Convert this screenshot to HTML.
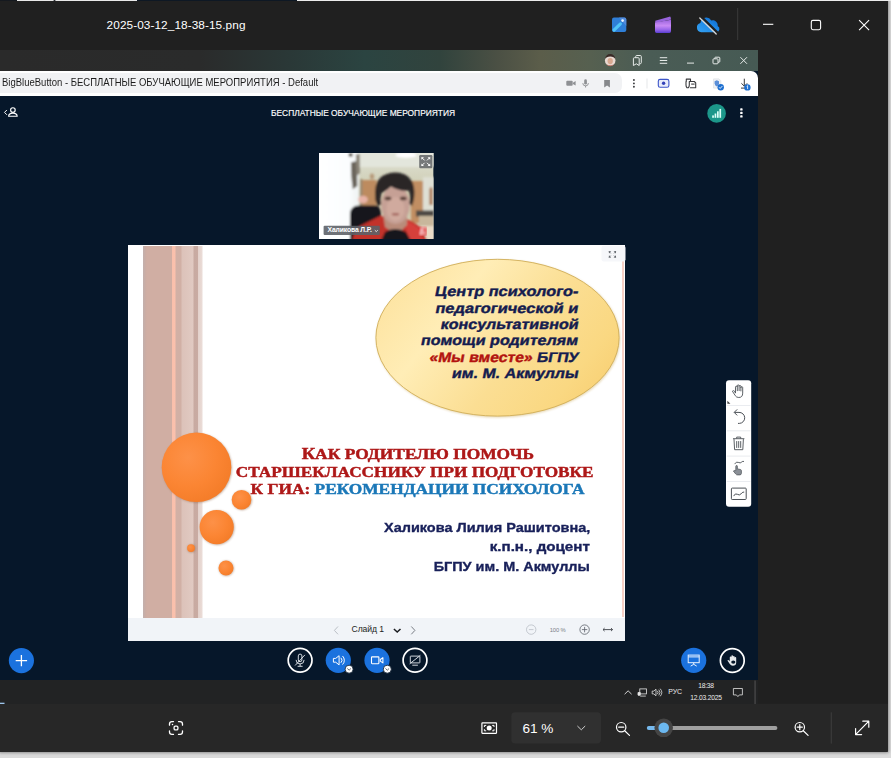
<!DOCTYPE html>
<html lang="ru">
<head>
<meta charset="utf-8">
<title>Photos</title>
<style>
*{margin:0;padding:0;box-sizing:border-box}
html,body{width:891px;height:758px;overflow:hidden;background:#dadada;font-family:"Liberation Sans",sans-serif}
.abs{position:absolute}
#win{position:absolute;left:0;top:0;width:888.2px;height:751.6px;background:#202020;overflow:hidden;border-bottom-right-radius:1.5px;box-shadow:0 0 3px 1px rgba(0,0,0,0.35)}
#toprow{position:absolute;left:0;top:0;width:891px;height:1px;background:linear-gradient(90deg,#15191f 0,#15191f 16.8px,#e9e9e9 17.2px,#e9e9e9 53.3px,#2a2d33 53.8px,#2a2d33 55.2px,#e9e9e9 55.7px,#e9e9e9 137px,#0e1824 137.5px,#0e1824 296.5px,#ececec 297.5px,#ececec 891px)}
/* photos title */
#fname{position:absolute;left:106.6px;top:16.1px;color:#fff;font-size:11.8px;line-height:18px;white-space:nowrap;letter-spacing:0.08px}
/* screenshot area */
#shot{position:absolute;left:0;top:49.5px;width:758px;height:654.3px;background:#06172a;overflow:hidden}
#brtitle{position:absolute;left:0;top:0;width:758px;height:21.5px;background:linear-gradient(90deg,#2a2a2a 0,#2a2b2b 200px,#2a3837 290px,#2b4441 365px,#31433d 440px,#4b5044 498px,#5b5d4a 540px,#566050 590px,#4a5c55 650px,#465a54 758px)}
#brbar{position:absolute;left:0;top:21.5px;width:758px;height:25px;background:#fff;border-top-right-radius:7px}
#brurl{position:absolute;left:0;top:2.2px;width:621.5px;height:20.2px;background:#f1f2f4;border-radius:0 7px 7px 0}
#brtext{position:absolute;left:1.8px;top:5.1px;font-size:10.2px;line-height:14px;color:#1c1c1c;white-space:nowrap;transform:scaleX(0.9335);transform-origin:0 50%}
#bbbtitle{position:absolute;left:0;width:726px;top:57.1px;-webkit-text-stroke:0.15px;text-align:center;color:#fff;font-size:8.4px;line-height:12px;white-space:nowrap}
#slide{position:absolute;left:128px;top:195.8px;width:497.4px;height:395.7px;background:#fff;overflow:hidden}
#sbar{position:absolute;left:0;top:372.5px;width:100%;height:24px;background:#f1f4f8}
#taskbar{position:absolute;left:0;top:630.3px;width:758px;height:24px;background:#222324}
#etext{position:absolute;left:200.7px;top:37.9px;width:250px;text-align:right;font:bold 14px/16.34px "Liberation Sans",sans-serif;color:#151c4f;white-space:nowrap;-webkit-text-stroke:0.4px}
#etext span,#auth span{display:inline-block;transform-origin:100% 50%}
#ttl{position:absolute;left:64.5px;top:200.35px;width:450px;text-align:center;font:bold 15.1px/17.3px "Liberation Serif",serif;color:#ae1818;white-space:nowrap;-webkit-text-stroke:0.45px}
#ttl span{display:inline-block;transform-origin:50% 50%}
#ttl i{font-style:normal;font-size:16.1px;line-height:1px}
#ttl b{color:#1b78b8}
#ttl div:nth-child(2){margin-top:0.9px}
#ttl div:nth-child(3){margin-top:-0.4px}
#auth{position:absolute;left:200px;top:272.6px;width:261.8px;text-align:right;font:bold 13.3px/19.35px "Liberation Sans",sans-serif;color:#18205a;white-space:nowrap;-webkit-text-stroke:0.35px}
.t{white-space:nowrap;line-height:10px}
</style>
</head>
<body>
<div id="win">
  <!-- photos title icons -->
  <svg class="abs" style="left:600px;top:8px" width="290" height="36" viewBox="600 8 290 36">
    <defs>
      <linearGradient id="cg" x1="0" y1="0" x2="0" y2="1"><stop offset="0" stop-color="#9a63dd"/><stop offset="0.45" stop-color="#c98af5"/><stop offset="0.75" stop-color="#9a66ea"/><stop offset="1" stop-color="#5a3fd0"/></linearGradient>
      <linearGradient id="og" x1="0" y1="1" x2="1" y2="0"><stop offset="0" stop-color="#36a3f3"/><stop offset="0.6" stop-color="#1a84e4"/><stop offset="1" stop-color="#0d5fc0"/></linearGradient>
    </defs>
    <!-- edit -->
    <rect x="612" y="17.6" width="14.3" height="14.4" rx="2" fill="#2f7fd8"/>
    <path d="M619 17.6h5.3a2 2 0 0 1 2 2V26z" fill="#5b8fdc" opacity="0.8"/>
    <path d="M614 30.200L620.400 23.800" stroke="#4fc4f8" stroke-width="3.100" stroke-linecap="round"/>
    <circle cx="622.6" cy="20.6" r="1.3" fill="#eef6ff"/>
    <!-- clipchamp -->
    <path d="M655.200 20.800L669.400 16.700a1 1 0 0 1 1.300 0.700L671 19.600L655.400 23z" fill="#9863dc"/>
    <path d="M655 22.600L671 19.800V31.300a1.600 1.600 0 0 1-1.600 1.600H656.600a1.600 1.600 0 0 1-1.600-1.600z" fill="url(#cg)"/>
    <!-- onedrive -->
    <path transform="translate(696.900 0) scale(0.940 1) translate(-696.900 0)" d="M701.5 32.2a4.6 4.6 0 0 1-0.9-9.1a6.3 6.3 0 0 1 11.6-2.6a5.2 5.2 0 0 1 6.8 5.6a3.2 3.2 0 0 1-1.6 6.1z" fill="url(#og)"/>
    <path d="M701.6 17.2L718.2 33.4" stroke="#202020" stroke-width="2.4"/>
    <path d="M699.8 18L716.2 34" stroke="#d9d9d9" stroke-width="1.3" stroke-linecap="round"/>
    <!-- separator -->
    <rect x="737.2" y="8" width="1" height="32" fill="#3b3b3b"/>
    <!-- window controls -->
    <path d="M763 24.3h10.3" stroke="#fff" stroke-width="1.1"/>
    <rect x="811.3" y="20.4" width="9.3" height="9.3" rx="1.6" fill="none" stroke="#fff" stroke-width="1.1"/>
    <path d="M859.1 20.1l10 10M869.1 20.1l-10 10" stroke="#fff" stroke-width="1.1"/>
  </svg>
  <!-- photos bottom bar -->
  <svg class="abs" style="left:0;top:703px" width="888.5" height="49" viewBox="0 703 888.500 49">
    <rect x="0" y="703.7" width="888.5" height="48.3" fill="#272727"/>
    <!-- left icon -->
    <g fill="none" stroke="#fff" stroke-width="1.300" stroke-linecap="round">
      <path d="M169.500 725.200v-1.200a2.400 2.400 0 0 1 2.400-2.400h1.600M178.500 721.600h1.600a2.400 2.400 0 0 1 2.400 2.400v1.200M182.500 730.800v1.200a2.400 2.400 0 0 1-2.400 2.400h-1.600M173.500 734.400h-1.600a2.400 2.400 0 0 1-2.400-2.400v-1.200"/>
      <rect x="174.100" y="726.100" width="3.800" height="3.800" rx="1.200"/>
    </g>
    <circle cx="172.500" cy="724.500" r="0.750" fill="#fff"/>
    <!-- fit icon -->
    <rect x="481.900" y="722.900" width="14.600" height="10.400" rx="0.500" fill="none" stroke="#fff" stroke-width="1.200"/>
    <path d="M484.400 727v-1.600h1.800M492.200 725.400h1.800v1.600M494 729.200v1.600h-1.800M486.200 730.800h-1.800v-1.600" fill="none" stroke="#fff" stroke-width="1"/>
    <circle cx="489.200" cy="728.100" r="2.500" fill="#fff"/>
    <!-- zoom dropdown -->
    <rect x="511.300" y="712.300" width="89.700" height="31.300" rx="4" fill="#303030"/>
    <path d="M577.400 726l3.900 3.800l3.900-3.800" fill="none" stroke="#cfcfcf" stroke-width="1"/>
    <!-- zoom out -->
    <circle cx="621.200" cy="727.200" r="4.700" fill="none" stroke="#fff" stroke-width="1.200"/><path d="M618.700 727.200h5M624.700 730.700l4.800 4.700" stroke="#fff" stroke-width="1.200" stroke-linecap="round"/>
    <!-- slider -->
    <rect x="646.800" y="726" width="20" height="3.900" rx="1.950" fill="#76b9ed"/>
    <rect x="664" y="726" width="113.400" height="3.900" rx="1.950" fill="#9f9f9f"/>
    <circle cx="663.700" cy="727.800" r="9.300" fill="#454545"/>
    <circle cx="663.700" cy="727.800" r="5.300" fill="#6cb8f0"/>
    <!-- zoom in -->
    <circle cx="799.800" cy="727.200" r="4.700" fill="none" stroke="#fff" stroke-width="1.200"/><path d="M797.300 727.200h5M799.800 724.700v5M803.300 730.700l4.800 4.700" stroke="#fff" stroke-width="1.200" stroke-linecap="round"/>
    <rect x="830.800" y="712.300" width="0.900" height="31.300" fill="#404040"/>
    <!-- expand -->
    <path d="M855.600 734.600l13.200-13.400M862.800 721.200h6v6M855.600 728.600v6h6" fill="none" stroke="#fff" stroke-width="1.200" stroke-linecap="round" stroke-linejoin="round"/>
  </svg>
  <div class="abs t" style="left:522.400px;top:720.600px;font-size:13.600px;line-height:16px;color:#fff">61 %</div>
  <div id="fname">2025-03-12_18-38-15.png</div>
  <div id="shot">
    <div id="brtitle"></div>
    <div id="brbar"><div id="brurl"></div><div id="brtext">BigBlueButton - БЕСПЛАТНЫЕ ОБУЧАЮЩИЕ МЕРОПРИЯТИЯ - Default</div></div>
    <svg class="abs" style="left:540px;top:0" width="218" height="46" viewBox="540 49.5 218 46">
      <!-- avatar -->
      <circle cx="610.2" cy="60" r="5.3" fill="#e8d9d2"/>
      <path d="M605.2 58.5a5 5 0 0 1 10 0q-1-2.6-5-2.6t-5 2.600z" fill="#3a2a26"/>
      <ellipse cx="610.2" cy="60.6" rx="2.7" ry="3.1" fill="#d8a890"/>
      <path d="M606 63.6q4.200 2.600 8.400 0a5.300 5.300 0 0 1-8.400 0z" fill="#c96a5a"/>
      <!-- tabs icon -->
      <g fill="none" stroke="#e6eae8" stroke-width="1">
        <path d="M635.700 57.2v-1.200a1 1 0 0 1 1-1h3.600a1 1 0 0 1 1 1v6.200a1 1 0 0 1-1 1h-0.600"/>
        <path d="M633.400 58.200a1 1 0 0 1 1-1h3.800a1 1 0 0 1 1 1v6.800l-2.900-1.700l-2.900 1.700z"/>
      </g>
      <!-- hamburger -->
      <path d="M659.800 57.200h7.400M659.800 60h7.400M659.800 62.800h7.400" stroke="#e6eae8" stroke-width="1"/>
      <!-- min / restore / close -->
      <path d="M687 62.600h7" stroke="#e6eae8" stroke-width="1"/>
      <g fill="none" stroke="#e6eae8" stroke-width="1"><rect x="713" y="58.300" width="5" height="5" rx="0.800"/><path d="M714.800 58.300v-0.800a0.800 0.800 0 0 1 0.800-0.800h3.400a0.800 0.800 0 0 1 0.800 0.800v3.400a0.800 0.800 0 0 1-0.800 0.800h-1"/></g>
      <path d="M740.400 56.700l6.600 6.600M747 56.700l-6.600 6.600" stroke="#e6eae8" stroke-width="1"/>
      <!-- address bar icons -->
      <g fill="#8e9093">
        <rect x="566.300" y="80.300" width="6.400" height="5" rx="1"/><path d="M572.900 82.200l2.700-1.700v4.600l-2.700-1.700z"/>
        <rect x="584.200" y="78.800" width="2.700" height="5.200" rx="1.350"/>
        <path d="M582.800 82.600a2.800 2.800 0 0 0 5.600 0" fill="none" stroke="#8e9093" stroke-width="0.900"/><rect x="585.150" y="85.200" width="0.900" height="1.800"/>
        <path d="M604.200 79.400h5.700v7.600l-2.850-2.100l-2.850 2.100z" fill="#86888b"/>
      </g>
      <g fill="#3c3d40"><circle cx="633.900" cy="79.500" r="0.950"/><circle cx="633.900" cy="82.900" r="0.950"/><circle cx="633.900" cy="86.300" r="0.950"/></g>
      <rect x="646.600" y="78" width="0.800" height="10" fill="#dfe1e4"/>
      <!-- record -->
      <rect x="658.300" y="78.900" width="10.600" height="7.800" rx="1.800" fill="#e8ecfb" stroke="#3c55c8" stroke-width="1.100"/><circle cx="663.600" cy="82.800" r="1.700" fill="#3342b8"/>
      <!-- extension -->
      <g fill="none" stroke="#3a3b3e" stroke-width="1.100" stroke-linejoin="round">
        <path d="M686.300 78.600h4.200v2.400h-1.200v3.400q0 1.600-0.900 2.800h-1.500q-0.900-1.200-0.900-2.800v-3.400h0.300z"/>
        <path d="M690.500 81h3.800l1.400 1.400v4.800h-5.800"/><path d="M691.200 83.600h3.400"/>
      </g>
      <!-- shield -->
      <path d="M713.600 78.400h5.400l1.800 1.800v7.400h-7.200z" fill="#f1f3f6" stroke="#d4d8de" stroke-width="0.600"/>
      <path d="M714.600 80.700l2.200-0.900l2.200 0.900v2q0 2.200-2.200 3.200q-2.200-1-2.200-3.200z" fill="#5b8fd8"/>
      <circle cx="720.700" cy="86.700" r="3.200" fill="#1d6fd0"/><path d="M719.100 86.800l1.100 1.100l2.100-2.300" fill="none" stroke="#fff" stroke-width="0.900"/>
      <!-- download -->
      <path d="M744.300 78.200v7.200M741.400 82.800l2.900 2.900l2.900-2.900M741 87.600h4" fill="none" stroke="#3a3b3e" stroke-width="1"/>
      <circle cx="747.400" cy="86.900" r="3.200" fill="#1d6fd0"/><path d="M746.700 85.900l0.900-0.700v3.400" fill="none" stroke="#fff" stroke-width="0.800"/>
    </svg>
    <div id="bbbtitle">БЕСПЛАТНЫЕ ОБУЧАЮЩИЕ МЕРОПРИЯТИЯ</div>
    <!-- webcam -->
    <svg class="abs" style="left:319px;top:103px" width="114.600" height="86.400" viewBox="0 0 114.600 86.400">
      <defs>
        <filter id="wb" x="-5%" y="-5%" width="110%" height="110%"><feGaussianBlur stdDeviation="0.9"/></filter>
        <filter id="wb2" x="-10%" y="-10%" width="120%" height="120%"><feGaussianBlur stdDeviation="1.600"/></filter>
        <clipPath id="wc"><rect x="0" y="0" width="114.600" height="86.400"/></clipPath>
        <linearGradient id="wl" x1="0" y1="0" x2="1" y2="0"><stop offset="0" stop-color="#ffffff"/><stop offset="0.75" stop-color="#fbfdfe"/><stop offset="1" stop-color="#eef2f2"/></linearGradient>
        <linearGradient id="wr" x1="0" y1="0" x2="0" y2="1"><stop offset="0" stop-color="#dfe2d6"/><stop offset="0.28" stop-color="#d3d3bd"/><stop offset="0.55" stop-color="#c9c6a8"/><stop offset="1" stop-color="#d8d2bd"/></linearGradient>
      </defs>
      <g clip-path="url(#wc)">
        <rect x="0" y="0" width="114.600" height="86.400" fill="url(#wr)"/>
        <g filter="url(#wb)">
          <rect x="-2" y="-2" width="42" height="92" fill="url(#wl)"/>
          <!-- ceiling -->
          <rect x="40" y="-2" width="78" height="16" fill="#e3e6dc"/>
          <ellipse cx="87" cy="2.200" rx="10.500" ry="2.600" fill="#ffffff"/>
          <!-- picture frames -->
          <rect x="29.800" y="0" width="3.600" height="3.600" fill="#5a544b"/>
          <path d="M32 9.500l5.800-1.500l0.500 25l-4.500 3.200q-2.200-13-1.800-26.700z" fill="#6b655c"/>
          <path d="M36.900 1.500l3.800-0.500l0.300 19l-3.400 3z" fill="#8a8478"/>

          <!-- wardrobe left -->
          <rect x="42.500" y="27" width="15" height="26" fill="#bd8b5e"/>
          <rect x="41" y="26" width="2.500" height="27" fill="#9b8a72"/>
          <ellipse cx="53" cy="23.500" rx="2.200" ry="3" fill="#b79b7c"/>
          <!-- hand -->
          <ellipse cx="44" cy="46.500" rx="4.800" ry="3.800" fill="#e7b3a6"/>
          <!-- wardrobe right -->
          <rect x="92" y="28" width="13" height="42" fill="#c18e62"/>
          <rect x="104" y="24" width="12" height="62" fill="#dedfd4"/>
          <path d="M110.500 36q1.800-4 3 0v16h-3z" fill="#a8744e"/>
          <rect x="97" y="57.500" width="18" height="6" fill="#4e4a44"/>
          <rect x="100" y="63" width="15" height="12" fill="#c8b79c"/>
          <rect x="98" y="73" width="17" height="14" fill="#eadcc8"/>
          <!-- chair -->
          <path d="M31 88v-26q0-9.500 9-9.500h16q6 0 6 9v27z" fill="#14161b"/>
          <!-- jacket -->
          <path d="M33 88q2-14 14-18l14-7l22 2q14 3 21 12l4 11z" fill="#c2312b"/>
          <path d="M84 66q12 4 18 12l3 10h-14z" fill="#d6403a"/>
          <!-- neck + top -->
          <path d="M64 60h24v12l-10 10l-12-8z" fill="#b98c7a"/>
          <path d="M62 88l4-9q10-6 21 0l5 9z" fill="#17161a"/>
          <!-- face -->
          <ellipse cx="76.500" cy="52" rx="14.300" ry="19" fill="#c6a095"/>
          <ellipse cx="76.500" cy="56" rx="9" ry="12" fill="#d0aa9e"/>
          <ellipse cx="69" cy="45.400" rx="3.400" ry="1.900" fill="#5a4039"/>
          <ellipse cx="84.300" cy="45.400" rx="3.400" ry="1.900" fill="#5a4039"/>
          <ellipse cx="76.500" cy="61.200" rx="3.800" ry="1.300" fill="#a5665e"/>
          <!-- hair -->
          <path d="M56.300 47Q54.500 30 62 24Q70 18.300 80.500 19.800Q92.500 22 95 34Q96.500 44 93 53L90.300 50.500Q92 42 89.500 37.500Q80 38.500 72 33.500Q66.500 38.500 62.500 40Q61 45.500 62.200 51.500L58.500 53Z" fill="#2a2527"/>
          </g>
        <!-- name label -->
        <rect x="4.600" y="72.700" width="56.200" height="9.300" rx="1" fill="#5d6268" opacity="0.900"/>
        <!-- logo -->
        <g filter="url(#wb)"><rect x="99.500" y="74" width="8" height="8.500" rx="1" fill="#e0262a"/>
        <path d="M102 75.800h4M102.400 75.800l-0.900 5.400h2.400q1.600-0.400 1.400-1.800q-0.400-1.200-2-1.200h-1" fill="none" stroke="#fff" stroke-width="1.100"/></g>
        <!-- fullscreen button -->
        <rect x="100.200" y="2" width="13.200" height="13.200" rx="1.200" fill="#6b6f70" opacity="0.920"/>
        <g stroke="#fff" stroke-width="1" fill="none"><path d="M103 4.800l2.600 2.600M110.600 4.800l-2.600 2.600M103 12.400l2.600-2.600M110.600 12.400l-2.600-2.600"/></g>
        <g fill="#fff"><path d="M102.400 4.200h2.600l-2.600 2.600zM111.200 4.200h-2.600l2.600 2.600zM102.400 13h2.600l-2.600-2.600zM111.200 13h-2.600l2.600-2.600z"/></g>
      </g>
    </svg>
    <div class="abs t" style="left:327.600px;top:175.800px;font-size:6.800px;font-weight:bold;color:#fff;letter-spacing:-0.150px">Халикова Л.Р.</div>
    <svg class="abs" style="left:373px;top:177px" width="8" height="8" viewBox="0 0 8 8"><path d="M1.800 3.200l1.500 1.400l1.500-1.400" fill="none" stroke="#fff" stroke-width="0.800"/></svg>
    <div id="slide">
      <!-- stripes -->
      <div class="abs" style="left:15.3px;top:1.2px;width:60px;height:371.1px;background:linear-gradient(90deg,#c2b0ad 0,#cbada4 2.5px,#d0aea3 4px,#d0aea3 28.5px,#f9bfab 29.5px,#fbc1ad 32px,#d2b0a5 33px,#d1b0a5 38px,#dcc2b9 39px,#e1cac2 50px,#c8aaa1 51px,#c9aba2 54.5px,#e4d2cc 55.5px,#eadcd7 59px,#fff 60px)"></div>
      <!-- right pink line -->
      <div class="abs" style="left:493.6px;top:16px;width:2.8px;height:356px;background:#f7d0c5"></div>
      <!-- ellipse -->
      <svg class="abs" style="left:240px;top:8px" width="260" height="170" viewBox="240 8 260 170">
        <defs>
          <linearGradient id="eg" x1="0" y1="0.25" x2="1" y2="0.75">
            <stop offset="0" stop-color="#fde3a0"/>
            <stop offset="0.28" stop-color="#ffedb6"/>
            <stop offset="0.6" stop-color="#fbde93"/>
            <stop offset="0.85" stop-color="#fad882"/>
            <stop offset="1" stop-color="#f8d074"/>
          </linearGradient>
          <filter id="esh" x="-5%" y="-5%" width="110%" height="110%"><feGaussianBlur stdDeviation="1.2"/></filter>
        </defs>
        <ellipse cx="370.2" cy="93.6" rx="122" ry="78.8" fill="#c9a85a" opacity="0.45" filter="url(#esh)"/>
        <ellipse cx="369.5" cy="92.7" rx="121.6" ry="78.4" fill="url(#eg)" stroke="#d0ae58" stroke-width="0.9"/>
      </svg>
      <div id="etext">
        <div><span style="transform:skewX(-11deg) scaleX(1.170)">Центр психолого-</span></div>
        <div><span style="transform:skewX(-11deg) scaleX(1.176)">педагогической и</span></div>
        <div><span style="transform:skewX(-11deg) scaleX(1.150)">консультативной</span></div>
        <div><span style="transform:skewX(-11deg) scaleX(1.152)">помощи родителям</span></div>
        <div><span style="transform:skewX(-11deg) scaleX(1.123)"><b style="color:#b3130f">«Мы вместе»</b> БГПУ</span></div>
        <div><span style="transform:skewX(-11deg) scaleX(1.143)">им. М. Акмуллы</span></div>
      </div>
      <!-- circles -->
      <svg class="abs" style="left:20px;top:171.2px" width="120" height="180" viewBox="148 416 120 180">
        <defs><filter id="csh" x="-20%" y="-20%" width="140%" height="140%"><feGaussianBlur stdDeviation="0.9"/></filter><radialGradient id="cgr" cx="0.38" cy="0.36" r="0.75"><stop offset="0" stop-color="#fd9148"/><stop offset="0.55" stop-color="#fb8533"/><stop offset="1" stop-color="#f27a26"/></radialGradient></defs>
        <g fill="#8a5a3a" opacity="0.5" filter="url(#csh)">
          <circle cx="197.3" cy="468.1" r="34.6"/><circle cx="242.1" cy="500.3" r="9.9"/><circle cx="217.3" cy="527.7" r="17.2"/><circle cx="191.4" cy="548.5" r="4"/><circle cx="226.4" cy="568.4" r="7.6"/>
        </g>
        <g fill="url(#cgr)">
          <circle cx="196.5" cy="467.3" r="34.8"/><circle cx="241.5" cy="499.7" r="9.8"/><circle cx="216.7" cy="527.1" r="17.1"/><circle cx="191" cy="548.1" r="3.9"/><circle cx="226" cy="568" r="7.5"/>
        </g>
      </svg>
      <!-- title -->
      <div id="ttl">
        <div><span style="transform:scaleX(1.152)"><i>К</i>АК РОДИТЕЛЮ ПОМОЧЬ</span></div>
        <div><span style="transform:scaleX(1.142);position:relative;left:-2.9px">СТАРШЕКЛАССНИКУ ПРИ ПОДГОТОВКЕ</span></div>
        <div><span style="transform:scaleX(1.147)">К ГИА: <b>РЕКОМЕНДАЦИИ ПСИХОЛОГА</b></span></div>
      </div>
      <div id="auth">
        <div><span style="transform:scaleX(1.09)">Халикова Лилия Рашитовна,</span></div>
        <div><span style="transform:scaleX(1.14)">к.п.н., доцент</span></div>
        <div><span style="transform:scaleX(1.086)">БГПУ им. М. Акмуллы</span></div>
      </div>
      <div id="sbar"></div>
    </div>
    <svg class="abs" style="left:0;top:0" width="758" height="654.3" viewBox="0 49.5 758 654.3">
      <!-- bbb header left -->
      <path d="M6.900 109.500l-2.400 2.400l2.400 2.400" fill="none" stroke="#fff" stroke-width="1"/>
      <circle cx="12.900" cy="109.600" r="2.300" fill="none" stroke="#fff" stroke-width="1.150"/>
      <path d="M8.600 115.800q0.200-3.200 4.300-3.200t4.300 3.200z" fill="none" stroke="#fff" stroke-width="1.150" stroke-linejoin="round"/>
      <!-- connection status -->
      <circle cx="716.600" cy="112.900" r="9.300" fill="#1c978a"/>
      <g fill="#dcfff8"><rect x="712.200" y="114.900" width="1.700" height="2.400"/><rect x="714.600" y="113" width="1.700" height="4.300"/><rect x="717" y="110.800" width="1.700" height="6.500"/><rect x="719.400" y="108.400" width="1.700" height="8.900"/></g>
      <g fill="#fff"><rect x="740.200" y="107.800" width="2.400" height="2.300" rx="0.600"/><rect x="740.200" y="111.300" width="2.400" height="2.300" rx="0.600"/><rect x="740.200" y="114.800" width="2.400" height="2.300" rx="0.600"/></g>

      <!-- bottom actions -->
      <circle cx="21.400" cy="660.100" r="12.600" fill="#1b72de"/>
      <path d="M15.700 660.100h11.400M21.400 654.400v11.400" stroke="#fff" stroke-width="1.300"/>
      <!-- mic muted -->
      <circle cx="300.100" cy="659.800" r="11.900" fill="none" stroke="#fff" stroke-width="1.700"/>
      <g fill="none" stroke="#e8ecf0" stroke-width="0.900">
        <rect x="298.300" y="653.600" width="3.600" height="7.600" rx="1.800"/>
        <path d="M296.100 659.400a4 4 0 0 0 8 0M300.100 663.400v2.200M297.600 665.800h5"/>
        <path d="M304.900 654.400l-9.800 10.600"/>
      </g>
      <!-- speaker -->
      <circle cx="338.300" cy="659.800" r="12.600" fill="#1b72de"/>
      <g fill="none" stroke="#fff" stroke-width="1" stroke-linejoin="round">
        <path d="M333.400 657.900h2.300l3.400-2.700v9.200l-3.400-2.700h-2.300z"/>
        <path d="M340.900 657.300a3.600 3.600 0 0 1 0 5M342.500 655.500a6 6 0 0 1 0 8.600"/>
      </g>
      <circle cx="349.100" cy="668.700" r="4" fill="#fff" stroke="#06172a" stroke-width="0.800"/>
      <path d="M347.300 668l1.800 1.700l1.800-1.700" fill="none" stroke="#444" stroke-width="0.800"/>
      <!-- camera -->
      <circle cx="377" cy="659.800" r="12.600" fill="#1b72de"/>
      <g fill="none" stroke="#fff" stroke-width="1.100" stroke-linejoin="round">
        <rect x="371.500" y="656.400" width="7.400" height="6.800" rx="0.600"/>
        <path d="M380.300 659l2.600-1.800v5.200l-2.600-1.800z"/>
      </g>
      <circle cx="387.300" cy="668.700" r="4" fill="#fff" stroke="#06172a" stroke-width="0.800"/>
      <path d="M385.500 668l1.800 1.700l1.800-1.700" fill="none" stroke="#444" stroke-width="0.800"/>
      <!-- screenshare -->
      <circle cx="415" cy="659.800" r="11.900" fill="none" stroke="#fff" stroke-width="1.700"/>
      <g fill="none" stroke="#e8ecf0" stroke-width="0.900">
        <rect x="410.300" y="655.600" width="9.600" height="6.800" rx="0.500"/>
        <path d="M412.300 664.700h5.600M420.400 654.800l-10.800 8.600"/>
      </g>
      <!-- presentation -->
      <circle cx="693.700" cy="659.800" r="12.600" fill="#1b72de"/>
      <g fill="none" stroke="#e9f2ff" stroke-width="1">
        <rect x="688.200" y="654.600" width="11" height="7.600"/><path d="M688.200 656.400h11"/>
        <path d="M693.700 662.200v1.600M690.700 665.600l3-1.800l3 1.800"/>
      </g>
      <!-- raise hand -->
      <circle cx="732.300" cy="660" r="11.900" fill="none" stroke="#fff" stroke-width="1.700"/>
      <path d="M729.800 660.800v-4a0.800 0.800 0 0 1 1.600 0v-1.200a0.800 0.800 0 0 1 1.600 0v0.600a0.800 0.800 0 0 1 1.600 0v1a0.800 0.800 0 0 1 1.600 0v4.800q0 3.200-3.400 3.200q-2 0-3-1.600l-2.400-3.600q0.800-1 1.800 0z" fill="#e6e9ec"/>
      <ellipse cx="733.300" cy="661.600" rx="2.100" ry="1.600" fill="#06172a"/>
    </svg>
    <div id="taskbar"></div>
    <svg class="abs" style="left:0;top:0" width="758" height="654.3" viewBox="0 49.500 758 654.300">
      <!-- whiteboard toolbar -->
      <rect x="726" y="379.700" width="25.200" height="126.600" rx="3" fill="#fff"/>
      <path d="M726.800 405h23.600M726.800 430.300h23.600M726.800 455.600h23.600M726.800 481h23.600" stroke="#dfe3e8" stroke-width="0.700"/>
      <path d="M727.400 400.200l3 3h-3z" fill="#444"/>
      <!-- hand -->
      <path d="M735.500 392.600v-6a0.900 0.900 0 0 1 1.800 0v-1.300a0.900 0.900 0 0 1 1.800 0v0.600a0.900 0.900 0 0 1 1.800 0v1.200a0.900 0.900 0 0 1 1.800 0v5.500q0 4.400-3.900 4.400q-2.400 0-3.500-1.800l-2.900-4.500q1-1.200 2.100 0zM737.300 386.600v4M739.100 385.900v4.600M740.900 386.500v4.300" fill="none" stroke="#4a4f55" stroke-width="0.900" stroke-linejoin="round"/>
      <!-- undo -->
      <path d="M737.200 408.900l-3 3l3 3M734.400 411.900h4.600a5.500 5.500 0 0 1 0.400 11h-1.400" fill="none" stroke="#4a4f55" stroke-width="1"/>
      <!-- trash -->
      <path d="M733 438.200h11.400M736.700 438v-1.400h4v1.400M734 438.600l0.600 10.600h8.200l0.600-10.600M736.700 440.600v6.800M738.700 440.600v6.800M740.700 440.600v6.800" fill="none" stroke="#4a4f55" stroke-width="0.900"/>
      <!-- multi-user -->
      <path d="M734.600 463.600q1.600-3 4.200-1.600q1.400 1 2.800-0.400q1.200-1.200 2.400-0.600" fill="none" stroke="#4a4f55" stroke-width="0.900"/>
      <path d="M735.800 470v-4.200a0.800 0.800 0 0 1 1.600 0v2.600l3 0.600q1 0.200 1 1.200v2.600q0 1.600-1.600 1.600h-2.400q-1 0-1.600-0.800l-2.400-3q0.600-1 1.600-0.400z" fill="#8a8f96" stroke="#4a4f55" stroke-width="0.700"/>
      <!-- chart -->
      <rect x="731.400" y="487.600" width="14.800" height="11.400" rx="0.800" fill="none" stroke="#4a4f55" stroke-width="1"/>
      <path d="M733.600 495.600q1.800-3.400 3.800-1.800t3.800-0.600t3-1.600" fill="none" stroke="#4a4f55" stroke-width="1"/>

      <!-- slide fullscreen button -->
      <rect x="601.500" y="245.300" width="24" height="15.800" rx="2" fill="#f6f7fa"/>
      <g fill="#5a5e64"><path d="M608.700 250.600l2.500 0.300l-2.200 2.200zM616.100 250.600l-2.500 0.300l2.200 2.200zM608.700 257.200l2.500-0.300l-2.200-2.200zM616.100 257.200l-2.500-0.300l2.200-2.200z"/></g>
      <path d="M609.300 251.400l1.600 1.600M615.500 251.400l-1.600 1.600M609.300 256.600l1.600-1.600M615.500 256.600l-1.600-1.600" stroke="#777b82" stroke-width="0.700"/>

      <!-- slide bottom toolbar -->
      <path d="M338 626l-3.600 3.900l3.600 3.900" fill="none" stroke="#b4b9c0" stroke-width="0.900"/>
      <path d="M393.900 628.500l3.300 3l3.300-3" fill="none" stroke="#1a1c20" stroke-width="1.500"/>
      <path d="M411.300 626l3.600 3.900l-3.600 3.900" fill="none" stroke="#6c7178" stroke-width="0.900"/>
      <circle cx="531.200" cy="629.100" r="4.700" fill="none" stroke="#b9bec5" stroke-width="0.800"/><path d="M528.900 629.100h4.600" stroke="#b9bec5" stroke-width="0.800"/>
      <circle cx="584.600" cy="629.100" r="4.700" fill="none" stroke="#5b6068" stroke-width="0.800"/><path d="M581.900 629.100h5.400M584.600 626.400v5.400" stroke="#5b6068" stroke-width="0.800"/>
      <path d="M603.200 629.100h9.200M604.600 627.600l-1.600 1.500l1.600 1.500M611 627.600l1.600 1.500l-1.600 1.500" fill="none" stroke="#3e4248" stroke-width="0.900"/>

      <!-- taskbar -->
      <rect x="0" y="702.200" width="4.500" height="1.300" fill="#9cc4ea"/>
      <path d="M624.600 693.700l3.500-3.400l3.500 3.400" fill="none" stroke="#e6e6e6" stroke-width="0.900"/>
      <g fill="none" stroke="#e6e6e6" stroke-width="0.800"><rect x="639.800" y="688.400" width="6.800" height="5"/><path d="M638 694.600v-2.600h2.200v2.600zM640.200 695.600h5.600"/></g>
      <rect x="638" y="692" width="2.400" height="3" fill="#e6e6e6"/>
      <g fill="none" stroke="#e6e6e6" stroke-width="0.800"><path d="M652.200 690.600h1.600l2.200-1.900v6.600l-2.200-1.900h-1.600zM657.400 690.400a2.400 2.400 0 0 1 0 3.200M658.800 689.200a4.200 4.200 0 0 1 0 5.600M660.200 688.200a5.800 5.800 0 0 1 0 7.600"/></g>
      <g fill="none" stroke="#e6e6e6" stroke-width="0.800"><path d="M733.400 688h9v6.400h-3l-1.500 1.700l-1.500-1.700h-3z"/></g>
      <rect x="754.600" y="680" width="0.900" height="23.600" fill="#5a5a5a"/>
    </svg>
    <div class="abs t" style="left:351.600px;top:574.200px;font-size:8.600px;color:#1d1f23;letter-spacing:-0.100px">Слайд 1</div>
    <div class="abs t" style="left:549.800px;top:575.600px;font-size:5.800px;color:#7a7f86;letter-spacing:-0.150px">100 %</div>
    <div class="abs t" style="left:668.300px;top:637.600px;font-size:7px;color:#ececec;letter-spacing:-0.150px">РУС</div>
    <div class="abs t" style="left:690px;top:631.800px;width:32px;text-align:center;font-size:6.700px;color:#ececec;letter-spacing:-0.200px">18:38</div>
    <div class="abs t" style="left:686px;top:643.200px;width:40px;text-align:center;font-size:6.700px;color:#ececec;letter-spacing:-0.200px">12.03.2025</div>

  </div>
</div>
<div id="toprow"></div>
</body>
</html>
